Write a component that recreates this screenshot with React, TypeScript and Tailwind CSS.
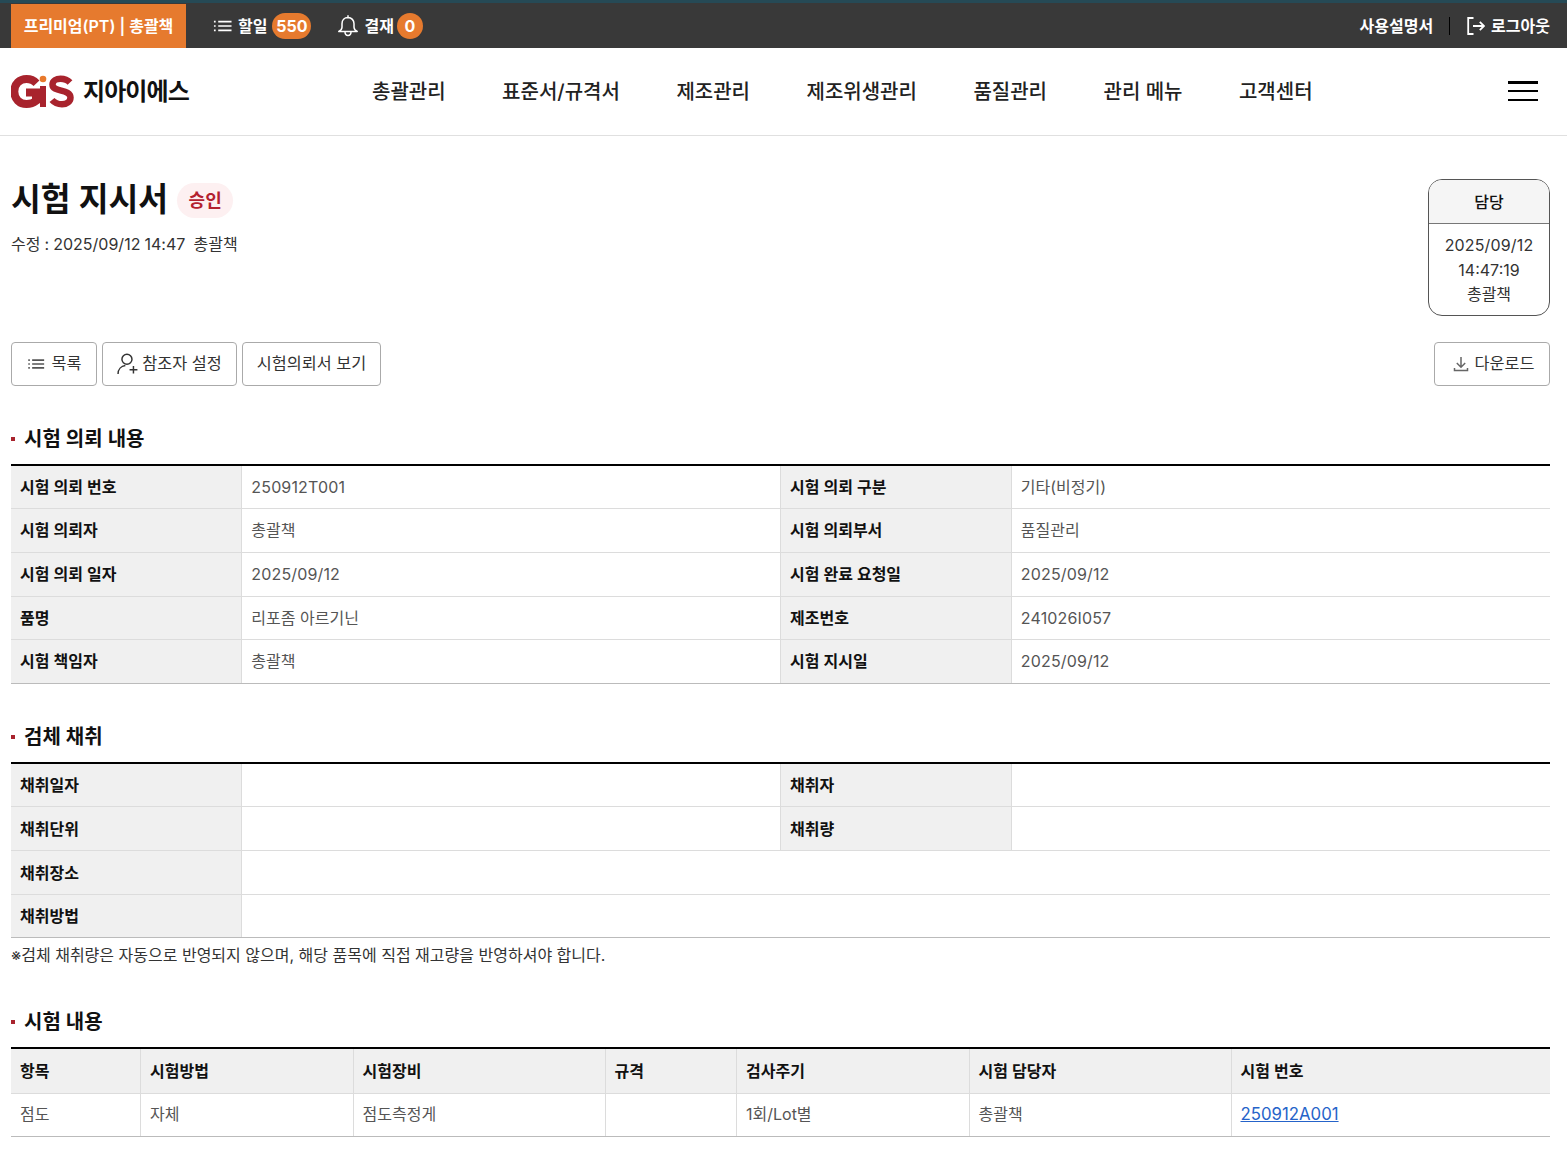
import type { ReactNode } from 'react'

const FONT = "[font-family:Inter,'Noto_Sans_CJK_KR',sans-serif]"

function ListIcon({ className }: { className?: string }) {
  return (
    <svg className={className} viewBox="0 0 20 14" fill="none" stroke="currentColor" strokeWidth="1.8">
      <path d="M1 2.500h1.800M1 7h1.800M1 11.500h1.800M5.500 2.500H19.500M5.500 7H19.500M5.500 11.500H19.500" />
    </svg>
  )
}

function BellIcon() {
  return (
    <svg className="w-[22px] h-[24px]" viewBox="0 0 22 24" fill="none" stroke="currentColor" strokeWidth="1.5" strokeLinejoin="round">
      <path d="M11 3.500c-3.700 0-6 2.900-6 6.300v3.400c0 1.600-1 3-3.200 4.300h18.400c-2.200-1.300-3.200-2.700-3.200-4.300V9.800c0-3.400-2.300-6.300-6-6.300z" />
      <path d="M11 1.200v2.300M8 17.800c0 2.200 1.300 3.700 3 3.700s3-1.500 3-3.700" />
    </svg>
  )
}

function LogoutIcon() {
  return (
    <svg className="w-[18px] h-[18px]" viewBox="0 0 18 18" fill="none" stroke="currentColor" strokeWidth="1.8">
      <path d="M6.500 1H1.200v16h5.300M6 9h11M12.800 4.800 17 9l-4.200 4.200" />
    </svg>
  )
}

function UserPlusIcon() {
  return (
    <svg className="w-[22px] h-[22px]" viewBox="0 0 21 21" fill="none" stroke="currentColor" strokeWidth="1.4">
      <circle cx="9.500" cy="6" r="4.800" />
      <path d="M1 20c0-4.500 3-7.500 7-8M12 16h7.500M15.700 12.500v7" />
    </svg>
  )
}

function DownloadIcon() {
  return (
    <svg className="w-[16px] h-[16px]" viewBox="0 0 16 16" fill="none" stroke="#666" strokeWidth="1.5">
      <path d="M8 1v10M3.800 7 8 11.200 12.200 7M1.500 12v2.500h13V12" />
    </svg>
  )
}

function Logo() {
  return (
    <svg className="w-[63px] h-[33px]" viewBox="1 0 63 33" fill="none">
      <path d="M26.500 8.200C24 5.500 20.500 4 16.500 4 9.500 4 4.300 9 4.300 16.500S9.500 29 16.500 29c3.500 0 7-1 9.500-3v-8.500H16" stroke="#a8232d" strokeWidth="8" />
      <rect x="30" y="11" width="6" height="21" fill="#a8232d" />
      <circle cx="33" cy="4" r="3.300" fill="#e8792b" />
      <path d="M60 7.500C57.500 4.800 54 3.800 50.500 3.800c-4.200 0-8 1.800-8 5.700 0 8.500 18 3.800 18 13 0 4-3.800 6.700-8.500 6.700-4 0-7.500-1.300-10-4.200" stroke="#a8232d" strokeWidth="6.500" />
    </svg>
  )
}

function Button({ children, className }: { children: ReactNode; className?: string }) {
  return (
    <button className={`h-11 pb-px flex items-center justify-center border border-[#aaaaaa] rounded-[4px] bg-white text-[16.3px] text-[#333333] ${className}`}>
      {children}
    </button>
  )
}

function SectionTitle({ children }: { children: ReactNode }) {
  return (
    <div className="flex items-center h-7 text-[20px] font-semibold text-[#111111] leading-7">
      <span className="w-[4px] h-[4px] bg-[#a8232d] mr-[9px]"></span>
      {children}
    </div>
  )
}

const thCls = 'bg-[#f0f0f0] border-r border-b border-[#dcdcdc] px-[9px] text-left text-[16px] font-semibold text-[#111111]'
const tdCls = 'border-r border-b border-[#dcdcdc] last:border-r-0 px-[9px] text-left text-[16px] font-normal text-[#555555]'
const rowCls = 'h-[44px] [&:nth-child(4)]:h-[43px] [&:last-child>*]:border-b-[#bbbbbb]'

// values that start with a digit run a little wider in the reference
function Value({ text }: { text: string }) {
  return <span className={/^\d/.test(text) ? 'tracking-[0.15px]' : ''}>{text}</span>
}

function InfoTable({ rows, firstRow }: { rows: string[][]; firstRow?: string }) {
  return (
    <table className="w-full table-fixed border-collapse border-t-2 border-t-black">
      <colgroup>
        <col className="w-[15%]" />
        <col className="w-[35%]" />
        <col className="w-[15%]" />
        <col className="w-[35%]" />
      </colgroup>
      <tbody>
        {rows.map((r, i) => (
          <tr key={i} className={`${rowCls} ${i === 0 ? firstRow ?? '' : ''}`}>
            <th className={thCls}>{r[0]}</th>
            <td className={tdCls} colSpan={r.length === 2 ? 3 : 1}><Value text={r[1]} /></td>
            {r.length > 2 && <th className={thCls}>{r[2]}</th>}
            {r.length > 2 && <td className={tdCls}><Value text={r[3]} /></td>}
          </tr>
        ))}
      </tbody>
    </table>
  )
}

const requestRows = [
  ['시험 의뢰 번호', '250912T001', '시험 의뢰 구분', '기타(비정기)'],
  ['시험 의뢰자', '총괄책', '시험 의뢰부서', '품질관리'],
  ['시험 의뢰 일자', '2025/09/12', '시험 완료 요청일', '2025/09/12'],
  ['품명', '리포좀 아르기닌', '제조번호', '241026I057'],
  ['시험 책임자', '총괄책', '시험 지시일', '2025/09/12'],
]

const sampleRows = [
  ['채취일자', '', '채취자', ''],
  ['채취단위', '', '채취량', ''],
  ['채취장소', ''],
  ['채취방법', ''],
]

const navItems = ['총괄관리', '표준서/규격서', '제조관리', '제조위생관리', '품질관리', '관리 메뉴', '고객센터']

const testHeaders = ['항목', '시험방법', '시험장비', '규격', '검사주기', '시험 담당자', '시험 번호']
const testWidths = ['w-[129.500px]', 'w-[212.500px]', 'w-[252px]', 'w-[131.500px]', 'w-[232.500px]', 'w-[262px]', 'w-[319px]']

export default function App() {
  return (
    <div className={`${FONT} bg-white w-full min-h-[1160px] text-[#222222]`}>
      <div className="h-12 bg-[#393939] border-t-[3px] border-t-[#264a56] flex items-end pl-[11px] pr-[17px] text-white">
        <div className="w-[175px] h-[44px] bg-[#e67a2e] flex items-center justify-center text-[16px] font-semibold">
          프리미엄(PT) | 총괄책
        </div>
        <div className="flex items-center h-[45px] ml-[27px] text-[16px] font-semibold">
          <ListIcon className="w-[19px] h-[14px]" />
          <span className="ml-[6px]">할일</span>
          <span className="ml-[5px] w-[39px] h-[26px] rounded-full bg-[#e67a2e] flex items-center justify-center text-[16px] font-bold">550</span>
          <span className="ml-[26px]"><BellIcon /></span>
          <span className="ml-[5px]">결재</span>
          <span className="ml-[3px] w-[26px] h-[26px] rounded-full bg-[#e67a2e] flex items-center justify-center font-bold">0</span>
        </div>
        <div className="ml-auto flex items-center h-[45px] text-[16px] font-semibold">
          <span>사용설명서</span>
          <span className="w-px h-[18px] bg-black ml-4 mr-[17px]"></span>
          <LogoutIcon />
          <span className="ml-[6px]">로그아웃</span>
        </div>
      </div>

      <header className="h-[88px] border-b border-[#e0e0e0] flex items-center pl-[11px] pr-[29px]">
        <Logo />
        <span className="ml-[9px] w-[289px] text-[24px] font-bold text-[#111111] tracking-[-0.9px]">지아이에스</span>
        <nav className="flex gap-[56.500px] text-[20px] font-medium text-[#222222]">
          {navItems.map((n) => (
            <a key={n}>{n}</a>
          ))}
        </nav>
        <div className="ml-auto w-[30px] flex flex-col mb-[2px]">
          <span className="h-[3px] bg-black"></span>
          <span className="h-[2px] bg-black mt-[6px]"></span>
          <span className="h-[2px] bg-black mt-[7px]"></span>
        </div>
      </header>

      <main className="pl-[11px] pr-[17px]">
        <div className="flex justify-between pt-[43px]">
          <div className="pt-px">
            <div className="flex items-center h-[40px]">
              <h1 className="text-[32.400px] font-semibold text-[#111111] leading-10">시험 지시서</h1>
              <span className="ml-[9px] w-[56px] h-[35px] rounded-full bg-[#fdf0f1] text-[#b3212f] text-[18px] font-semibold flex items-center justify-center">승인</span>
            </div>
            <p className="mt-[12px] text-[16px] leading-6 text-[#333333] whitespace-pre [word-spacing:-0.4px]">수정 : 2025/09/12 14:47  총괄책</p>
          </div>
          <div className="w-[122px] h-[137px] border border-[#555555] rounded-[14px] overflow-hidden text-center text-[16px] text-[#333333]">
            <div className="h-[44px] bg-[#f5f5f5] border-b border-[#777777] font-medium text-[#111111] flex items-center justify-center">담당</div>
            <div className="pt-[9px] leading-[24.500px]">
              <div className="tracking-[0.15px]">2025/09/12</div>
              <div>14:47:19</div>
              <div>총괄책</div>
            </div>
          </div>
        </div>

        <div className="flex gap-[5px] mt-[26px]">
          <Button className="w-[86px] gap-[7px]"><ListIcon className="w-[18px] h-[12px] text-[#555555]" />목록</Button>
          <Button className="w-[135px] gap-[3px]"><UserPlusIcon />참조자 설정</Button>
          <Button className="w-[139px]">시험의뢰서 보기</Button>
          <Button className="w-[116px] ml-auto gap-[6px] pl-[3px]"><DownloadIcon />다운로드</Button>
        </div>

        <section className="mt-[39px]">
          <SectionTitle>시험 의뢰 내용</SectionTitle>
          <div className="mt-[11px]"><InfoTable rows={requestRows} firstRow="first:h-[43px]" /></div>
        </section>

        <section className="mt-[39px]">
          <SectionTitle>검체 채취</SectionTitle>
          <div className="mt-[11px]"><InfoTable rows={sampleRows} /></div>
          <p className="mt-[5px] text-[16px] leading-6 text-[#333333]">※검체 채취량은 자동으로 반영되지 않으며, 해당 품목에 직접 재고량을 반영하셔야 합니다.</p>
        </section>

        <section className="mt-[41px]">
          <SectionTitle>시험 내용</SectionTitle>
          <div className="mt-[11px]">
            <table className="w-full table-fixed border-collapse border-t-2 border-t-black">
              <colgroup>
                {testWidths.map((w) => (
                  <col key={w} className={w} />
                ))}
              </colgroup>
              <thead>
                <tr className="h-[45px]">
                  {testHeaders.map((h) => (
                    <th key={h} className={`${thCls} last:border-r-0`}>{h}</th>
                  ))}
                </tr>
              </thead>
              <tbody>
                <tr className="h-[43px] [&>*]:border-b-[#bbbbbb] [&>*:not(:last-child)]:pb-[2px]">
                  <td className={tdCls}>점도</td>
                  <td className={tdCls}>자체</td>
                  <td className={tdCls}>점도측정게</td>
                  <td className={tdCls}></td>
                  <td className={tdCls}>1회/Lot별</td>
                  <td className={tdCls}>총괄책</td>
                  <td className={tdCls}><a className="text-[16.800px] text-[#2563c9] underline">250912A001</a></td>
                </tr>
              </tbody>
            </table>
          </div>
        </section>
      </main>
    </div>
  )
}
